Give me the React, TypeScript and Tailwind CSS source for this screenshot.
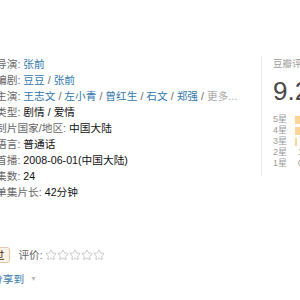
import { Star } from "lucide-react";

const Row = ({ label, children }: { label: string; children: React.ReactNode }) => (
  <div className="h-4 leading-4 whitespace-nowrap">
    <span className="text-[#666]">{label}:</span> {children}
  </div>
);

const Link = ({ children }: { children: React.ReactNode }) => (
  <a href="#" className="text-[#37a]">
    {children}
  </a>
);

const Sep = () => <span className="text-[#666]"> / </span>;

const bars = [
  { label: "5星", w: "w-[20px]" },
  { label: "4星", w: "w-[20px]" },
  { label: "3星", w: "w-[2px]" },
];

export default function App() {
  return (
    <div
      className="w-[300px] h-[300px] overflow-hidden bg-white text-[#111] text-[10.7px]"
      style={{ fontFamily: '"Liberation Sans", "Noto Sans CJK SC", sans-serif' }}
    >
      <div className="flex pt-[56px] ml-[-4px]">
        {/* info */}
        <div className="w-[265px] shrink-0">
          <Row label="导演">
            <Link>张前</Link>
          </Row>
          <Row label="编剧">
            <Link>豆豆</Link>
            <Sep />
            <Link>张前</Link>
          </Row>
          <Row label="主演">
            <Link>王志文</Link>
            <Sep />
            <Link>左小青</Link>
            <Sep />
            <Link>曾红生</Link>
            <Sep />
            <Link>石文</Link>
            <Sep />
            <Link>郑强</Link>
            <Sep />
            <span className="text-[#aaa]">更多...</span>
          </Row>
          <Row label="类型">剧情 / 爱情</Row>
          <Row label="制片国家/地区">中国大陆</Row>
          <Row label="语言">普通话</Row>
          <Row label="首播">2008-06-01(中国大陆)</Row>
          <Row label="集数">24</Row>
          <Row label="单集片长">42分钟</Row>
        </div>

        {/* rating */}
        <div className="h-[120px] border-l border-[#eaeaea] pl-[11px] shrink-0 w-[60px]">
          <div className="text-[9.5px] text-[#9b9b9b] leading-[12px] mt-[2px] whitespace-nowrap">豆瓣评分</div>
          <div className="text-[26px] text-[#494949] leading-[30px] mt-[6px]">9.2</div>
          <div className="mt-[8px] text-[9px] text-[#9b9b9b]">
            {bars.map((b) => (
              <div key={b.label} className="flex items-center h-[11px]">
                <span className="w-[22px]">{b.label}</span>
                <span className={`h-[8px] bg-[#ffd596] ${b.w}`} />
              </div>
            ))}
            <div className="flex items-center h-[11px]">
              <span className="w-[25px]">2星</span>
              <span>1.1%</span>
            </div>
            <div className="flex items-center h-[11px]">
              <span className="w-[25px]">1星</span>
              <span>0.3%</span>
            </div>
          </div>
        </div>
      </div>

      {/* interest */}
      <div className="ml-[-23px] mt-[47px] flex items-center h-[16px]">
        <span className="px-[5px] h-[16px] leading-[14px] border border-[#e3c6a8] bg-[#fff3e6] rounded-[3px] text-[#4a2c12]">
          看过
        </span>
        <span className="ml-[8px] text-[#666]">评价:</span>
        <span className="flex ml-[2px]">
          {[0, 1, 2, 3, 4].map((i) => (
            <Star key={i} size={12} strokeWidth={1.4} className="text-[#b0b0b0]" />
          ))}
        </span>
      </div>

      <div className="ml-[-8px] mt-[8px] flex items-center text-[#37a] h-4">
        分享到
        <span className="ml-[6px] text-[7px] text-[#bbb]">▼</span>
      </div>
    </div>
  );
}
